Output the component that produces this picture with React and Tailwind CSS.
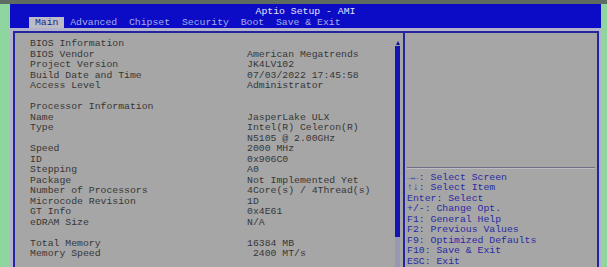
import React from 'react';

const TABS = ['Main', 'Advanced', 'Chipset', 'Security', 'Boot', 'Save & Exit'];

const ROWS = [
  ['BIOS Information', ''],
  ['BIOS Vendor', 'American Megatrends'],
  ['Project Version', 'JK4LV102'],
  ['Build Date and Time', '07/03/2022 17:45:58'],
  ['Access Level', 'Administrator'],
  ['', ''],
  ['Processor Information', ''],
  ['Name', 'JasperLake ULX'],
  ['Type', 'Intel(R) Celeron(R)'],
  ['', 'N5105 @ 2.00GHz'],
  ['Speed', '2000 MHz'],
  ['ID', '0x906C0'],
  ['Stepping', 'A0'],
  ['Package', 'Not Implemented Yet'],
  ['Number of Processors', '4Core(s) / 4Thread(s)'],
  ['Microcode Revision', '1D'],
  ['GT Info', '0x4E61'],
  ['eDRAM Size', 'N/A'],
  ['', ''],
  ['Total Memory', '16384 MB'],
  ['Memory Speed', ' 2400 MT/s'],
];

const HELP = [
  '→←: Select Screen',
  '↑↓: Select Item',
  'Enter: Select',
  '+/-: Change Opt.',
  'F1: General Help',
  'F2: Previous Values',
  'F9: Optimized Defaults',
  'F10: Save & Exit',
  'ESC: Exit',
];

export default function App() {
  return (
    <div className="w-[607px] h-[267px] overflow-hidden bg-[#8ed5a0] font-['Liberation_Mono',monospace] text-[9.8px]">
      {/* photo edge above the screen */}
      <div className="h-[4px] bg-[#5d6b60]" />
      <div className="ml-[10px] w-[591px]">
        {/* header */}
        <div className="h-[24px] bg-[#0c0cc6]">
          <div className="pt-[3px] leading-[10px] text-center text-[#e4e4ff] whitespace-pre">Aptio Setup - AMI</div>
          <div className="flex pl-[19px] leading-[11px] whitespace-pre">
            {TABS.map((t, i) => (
              <span key={t} className={i === 0 ? 'bg-[#bcbcc8] text-[#1c1c8c]' : 'text-[#a6ace6]'}>
                {' ' + t + ' '}
              </span>
            ))}
          </div>
        </div>

        {/* body */}
        <div className="h-[239px] bg-[#b2b2cc] pt-[3px] pl-[3px] pr-[2px]">
          <div className="h-full flex border-t-2 border-l-2 border-r-2 border-[#24249c] bg-[#a6a6a6]">
            {/* left panel */}
            <div className="w-[388px] flex">
              <div className="flex-1 pt-[6px] pl-[15px] text-[#363636] leading-[10.5px] whitespace-pre">
                {ROWS.map(([k, v], i) => (
                  <div key={i} className="grid grid-cols-[217px_1fr] h-[10.5px]">
                    <span>{k}</span>
                    <span>{v}</span>
                  </div>
                ))}
              </div>
              {/* scrollbar */}
              <div className="w-[5px] mr-[3px] flex flex-col pt-[5px]">
                <div className="h-[7px] flex items-end justify-center">
                  <div className="w-0 h-0 border-l-[2.5px] border-r-[2.5px] border-b-[4px] border-l-transparent border-r-transparent border-b-[#14148c]" />
                </div>
                <div className="h-[191px] mt-[1px] bg-[#1414b4]" />
                <div className="flex-1 bg-[#9898b6]" />
              </div>
            </div>
            {/* divider */}
            <div className="w-[2px] bg-[#24249c]" />
            {/* right panel */}
            <div className="flex-1 flex flex-col">
              <div className="h-[138px]" />
              <div className="h-px mx-[2px] bg-[#6e6e84]" />
              <div className="h-px mx-[2px] bg-[#bcbcc4]" />
              <div className="pt-[4px] pl-[2px] text-[#2a2aa4] leading-[10.5px] whitespace-pre">
                {HELP.map((h) => (
                  <div key={h} className="h-[10.5px]">{h}</div>
                ))}
              </div>
            </div>
          </div>
        </div>
      </div>
    </div>
  );
}
